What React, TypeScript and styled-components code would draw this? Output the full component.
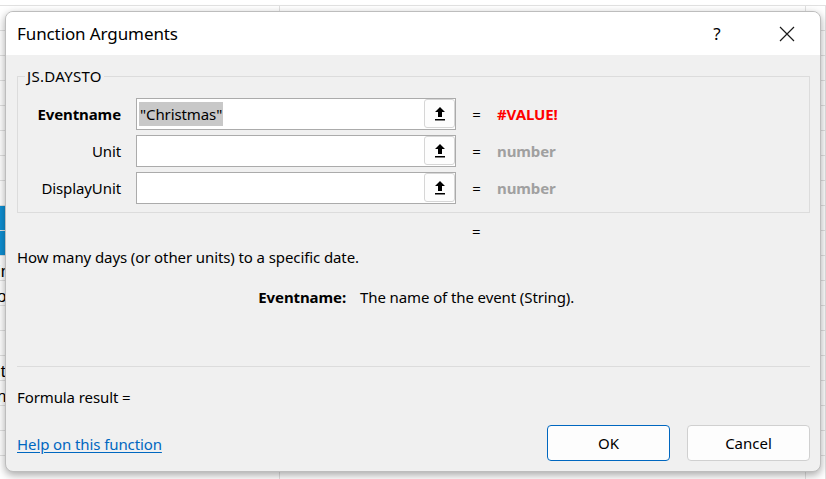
import React from 'react';
import styled, { createGlobalStyle } from 'styled-components';

const FONT = `'Noto Sans', 'Open Sans', sans-serif`;

const GlobalStyle = createGlobalStyle`
    html, body {
        margin: 0;
        padding: 0;
        background: #ffffff;
    }
    body {
        font-family: ${FONT};
        color: #000000;
    }
`;

const Page = styled.div`
    position: relative;
    width: 826px;
    height: 479px;
    overflow: hidden;
    background: #ffffff;
`;

// spreadsheet lying behind the dialog
const Sheet = styled.div`
    display: flex;
    flex-direction: column;
    padding-top: 5px;
`;

const SheetRow = styled.div`
    display: grid;
    grid-template-columns: 280px 526px 20px;
    height: 25px;
    border-top: 1px solid #e1e1e1;
    box-sizing: border-box;
`;

const SheetCell = styled.div<{ $fill?: string }>`
    border-right: 1px solid #e1e1e1;
    background: ${(p) => p.$fill || 'transparent'};
    overflow: hidden;
    white-space: nowrap;
    font-family: 'Liberation Sans', sans-serif;
    font-size: 17px;
    line-height: 32px;
    text-indent: -3px;
`;

const Dialog = styled.div`
    position: absolute;
    left: 5px;
    top: 11px;
    width: 816px;
    height: 461px;
    box-sizing: border-box;
    display: flex;
    flex-direction: column;
    background: #f0f0f0;
    border: 1px solid #bdbdbd;
    border-radius: 8px;
    overflow: hidden;
    box-shadow: 0 3px 9px rgba(0, 0, 0, 0.35);
`;

const TitleBar = styled.div`
    height: 43px;
    display: flex;
    align-items: center;
    background: #ffffff;
    padding: 0 0 0 11px;
`;

const Title = styled.div`
    flex: 1;
    font-size: 17px;
    letter-spacing: -0.1px;
    padding-bottom: 1px;
`;

const TitleButton = styled.div<{ $w: number }>`
    width: ${(p) => p.$w}px;
    height: 43px;
    display: flex;
    align-items: center;
    justify-content: center;
    font-size: 17px;
`;

const Body = styled.div`
    flex: 1;
    display: flex;
    flex-direction: column;
    padding: 0 10px 0 11px;
    font-size: 15px;
    letter-spacing: -0.1px;
`;

const Group = styled.fieldset`
    margin: 12px 0 0 0;
    padding: 13px 0 8px 0;
    border: 1px solid #dcdcdc;
    min-width: 0;
`;

const Legend = styled.legend`
    margin-left: 7px;
    padding: 0 2px;
    font-size: 15px;
    letter-spacing: 0.3px;
    line-height: 18px;
`;

const ArgRow = styled.div`
    display: flex;
    align-items: center;
    height: 32px;
    & + & {
        margin-top: 5px;
    }
`;

const ArgLabel = styled.div<{ $bold?: boolean }>`
    width: 103px;
    text-align: right;
    font-weight: ${(p) => (p.$bold ? 700 : 400)};
    margin-right: 15px;
`;

const Field = styled.div`
    width: 320px;
    height: 32px;
    box-sizing: border-box;
    display: flex;
    border: 1px solid #ababab;
    background: #ffffff;
`;

const FieldText = styled.div`
    flex: 1;
    display: flex;
    align-items: center;
    padding-left: 2px;
`;

const Selected = styled.span`
    background: #c8c8c8;
    line-height: 24px;
    padding: 0 1px;
`;

const RefButton = styled.div`
    width: 31px;
    height: 29px;
    margin: 0 0 0 auto;
    box-sizing: border-box;
    display: flex;
    align-items: center;
    justify-content: center;
    border: 1px solid #d6d6d6;
    border-radius: 3px;
    background: #fdfdfd;
`;

const Equals = styled.div`
    width: 41px;
    text-align: center;
`;

const ArgValue = styled.div<{ $error?: boolean }>`
    font-weight: 700;
    color: ${(p) => (p.$error ? '#ff0000' : '#a0a0a0')};
`;

const ResultRow = styled.div`
    display: flex;
    height: 20px;
    align-items: center;
    margin-top: 8px;
    padding-left: 455px;
`;

const Text = styled.div<{ $top: number }>`
    line-height: 20px;
    margin-top: ${(p) => p.$top}px;
`;

const ArgHelp = styled.div`
    display: flex;
    line-height: 20px;
    margin-top: 20px;
`;

const ArgHelpName = styled.div`
    width: 329px;
    text-align: right;
    font-weight: 700;
    margin-right: 14px;
`;

const Separator = styled.div`
    height: 1px;
    background: #dcdcdc;
    margin-top: 59px;
`;

const Footer = styled.div`
    display: flex;
    align-items: center;
    margin-top: 18px;
`;

const HelpLink = styled.a`
    flex: 1;
    color: #0067c0;
    text-decoration: underline;
    text-underline-offset: 2px;
    cursor: pointer;
    padding-top: 2px;
`;

const Button = styled.button<{ $primary?: boolean }>`
    width: 123px;
    height: 36px;
    box-sizing: border-box;
    font-family: ${FONT};
    font-size: 15px;
    color: #000000;
    background: #fdfdfd;
    border: 1px solid ${(p) => (p.$primary ? '#0067c0' : '#d0d0d0')};
    border-radius: 4px;
    & + & {
        margin-left: 17px;
    }
`;

const RefIcon = () => (
    <svg width="12" height="14" viewBox="0 0 12 14">
        <polygon points="6,0 11,5 8,5 8,10 4,10 4,5 1,5" fill="#000" />
        <rect x="1" y="12" width="10" height="1.5" fill="#000" />
    </svg>
);

const CloseIcon = () => (
    <svg width="16" height="16" viewBox="0 0 16 16">
        <path d="M1 1 L15 15 M15 1 L1 15" stroke="#1a1a1a" strokeWidth="1.2" />
    </svg>
);

const sheetRows: { text?: string; fill?: string }[] = [
    {}, {}, {}, {}, {}, {}, {}, {},
    { fill: '#0f8fd2' },
    { fill: '#0f8fd2' },
    { text: 'in' },
    { text: 'ol' },
    {}, {},
    { text: 'it' },
    { text: 'na' },
    {}, {}, {},
];

type Arg = {
    name: string;
    value?: string;
    result: string;
    error?: boolean;
    bold?: boolean;
};

const args: Arg[] = [
    { name: 'Eventname', value: '"Christmas"', result: '#VALUE!', error: true, bold: true },
    { name: 'Unit', result: 'number' },
    { name: 'DisplayUnit', result: 'number' },
];

const App = () => (
    <Page>
        <GlobalStyle />
        <Sheet>
            {sheetRows.map((row, i) => (
                <SheetRow key={i}>
                    <SheetCell $fill={row.fill}>{row.text}</SheetCell>
                    <SheetCell />
                    <SheetCell />
                </SheetRow>
            ))}
        </Sheet>
        <Dialog>
            <TitleBar>
                <Title>Function Arguments</Title>
                <TitleButton $w={74}>?</TitleButton>
                <TitleButton $w={66}>
                    <CloseIcon />
                </TitleButton>
            </TitleBar>
            <Body>
                <Group>
                    <Legend>JS.DAYSTO</Legend>
                    {args.map((arg) => (
                        <ArgRow key={arg.name}>
                            <ArgLabel $bold={arg.bold}>{arg.name}</ArgLabel>
                            <Field>
                                <FieldText>{arg.value && <Selected>{arg.value}</Selected>}</FieldText>
                                <RefButton>
                                    <RefIcon />
                                </RefButton>
                            </Field>
                            <Equals>=</Equals>
                            <ArgValue $error={arg.error}>{arg.result}</ArgValue>
                        </ArgRow>
                    ))}
                </Group>
                <ResultRow>=</ResultRow>
                <Text $top={6}>How many days (or other units) to a specific date.</Text>
                <ArgHelp>
                    <ArgHelpName>Eventname:</ArgHelpName>
                    <div>The name of the event (String).</div>
                </ArgHelp>
                <Separator />
                <Text $top={20}>Formula result =</Text>
                <Footer>
                    <HelpLink>Help on this function</HelpLink>
                    <Button $primary>OK</Button>
                    <Button>Cancel</Button>
                </Footer>
            </Body>
        </Dialog>
    </Page>
);

export default App;
